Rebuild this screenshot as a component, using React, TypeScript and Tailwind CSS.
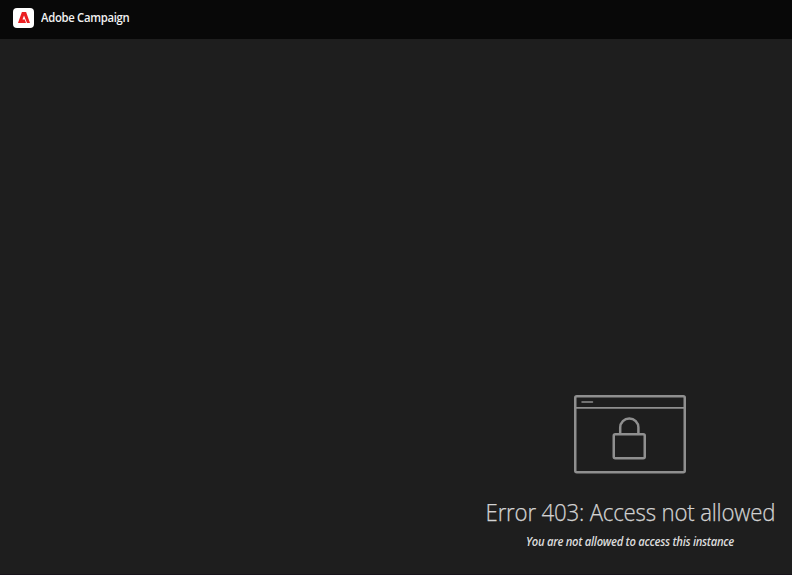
import React from 'react';

const AdobeLogo: React.FC = () => (
  <span className="flex h-5 w-[21px] items-center justify-center rounded-[4px] bg-white">
    <svg width="12" height="11" viewBox="0 0 12 11" fill="#eb1f22" aria-hidden="true">
      <path d="M3.9 0h4.2L12 11H9L6 3.4 4.5 7.4h2.3L8 11H0z" />
    </svg>
  </span>
);

const LockedWindow: React.FC = () => (
  <svg width="112" height="79" viewBox="0 0 112 79" fill="none" stroke="#8f8f8f" aria-hidden="true">
    <rect x="1.25" y="1.25" width="109.5" height="76" rx="1.5" strokeWidth="2.5" />
    <path d="M1 12.9h110" strokeWidth="1.8" />
    <path d="M8 7.1h10.5" strokeWidth="1.5" strokeLinecap="round" />
    <rect x="39.75" y="39.25" width="31" height="24" rx="1.5" strokeWidth="2.5" />
    <path d="M46.2 39v-6.4a9.1 9.1 0 0 1 18.2 0V39" strokeWidth="2.5" />
  </svg>
);

const App: React.FC = () => {
  return (
    <div className="flex h-screen flex-col overflow-hidden border-b border-[#17131a] bg-[#1e1e1e] font-['Open_Sans',sans-serif]">
      <header className="flex h-[39px] shrink-0 items-center gap-[7px] bg-[#080808] pb-1 pl-[13px]">
        <AdobeLogo />
        <span className="origin-left scale-x-[0.94] whitespace-nowrap text-[12px] font-semibold tracking-[-0.3px] text-[#f2f2f2]">
          Adobe Campaign
        </span>
      </header>

      <main className="flex flex-1 flex-col items-end justify-end">
        <div className="flex w-[324px] flex-col items-center pb-6">
          <LockedWindow />
          <h1 className="mt-[22px] scale-x-[0.926] whitespace-nowrap text-[24px] leading-8 font-light tracking-[-0.2px] text-[#d2d2d2] [-webkit-text-stroke:0.25px_#d2d2d2]">
            Error 403: Access not allowed
          </h1>
          <p className="mt-1.5 scale-x-[0.937] whitespace-nowrap text-[12px] leading-4 font-semibold tracking-[-0.3px] text-[#dcdcdc] italic">
            You are not allowed to access this instance
          </p>
        </div>
      </main>
    </div>
  );
};

export default App;
